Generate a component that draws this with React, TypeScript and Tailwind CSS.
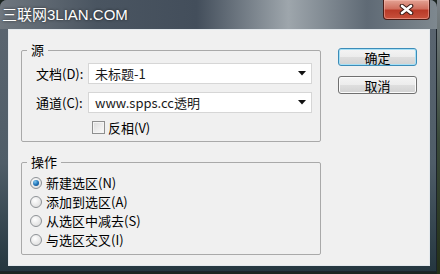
const cjk = "font-['Noto_Sans_CJK_SC','Noto_Sans',sans-serif]";

function Dropdown({ value }: { value: string }) {
  return (
    <div className="flex-1 h-[21px] bg-white border border-[#d6d6d6] flex items-center justify-between pl-[6px] pr-[5px]">
      <span className="text-[13px] leading-none text-[#1a1a1a]">{value}</span>
      <svg width="8" height="5" viewBox="0 0 8 5">
        <path d="M0 0 H8 L4 4.5 Z" fill="#111" />
      </svg>
    </div>
  );
}

function Radio({ checked, label }: { checked?: boolean; label: string }) {
  return (
    <div className="h-[19px] flex items-center gap-[4px]">
      <span className="w-[12px] h-[12px] rounded-full border border-[#8e9296] bg-[radial-gradient(circle_at_40%_35%,#ffffff,#e2e2e2_70%,#cfcfcf)] flex items-center justify-center">
        {checked && (
          <span className="w-[6px] h-[6px] rounded-full bg-[radial-gradient(circle_at_35%_30%,#7cc6f0,#1c6fb4_55%,#0d3f74)]" />
        )}
      </span>
      <span className="text-[13px] leading-none text-black">{label}</span>
    </div>
  );
}

function Button({ label, primary }: { label: string; primary?: boolean }) {
  return (
    <div
      className={
        primary
          ? "w-[79px] h-[18px] rounded-[3px] border border-[#3c8cb8] shadow-[inset_0_0_0_1px_#a6e0f6] bg-[linear-gradient(#f4f4f4_0%,#ececec_50%,#dedede_51%,#d2d2d2_100%)] flex items-center justify-center"
          : "w-[79px] h-[18px] rounded-[3px] border border-[#707070] shadow-[inset_0_0_0_1px_#fbfbfb] bg-[linear-gradient(#f4f4f4_0%,#ececec_50%,#dedede_51%,#d2d2d2_100%)] flex items-center justify-center"
      }
    >
      <span className="text-[13px] leading-none text-black">{label}</span>
    </div>
  );
}

export default function App() {
  return (
    <div className={`w-[440px] h-[274px] overflow-hidden flex bg-[#1a2420] ${cjk}`}>
      <div className="w-[437px] h-[272px] shrink-0 rounded-t-[7px] flex flex-col bg-[linear-gradient(#5c6671,#4f5d68_60%,#24363f)] shadow-[inset_-1px_-1px_0_#1b232a]">
        {/* title bar */}
        <div className="h-[29px] shrink-0 rounded-t-[7px] flex items-start justify-between pl-[2px] pr-[7px] bg-[linear-gradient(90deg,#6f777f_0%,#4a5561_22%,#434e5b_45%,#9ea6ac_66%,#5f6a75_84%,#7e888f_100%)]">
          <div className="pt-[5px] flex items-baseline text-white [text-shadow:0_0_3px_rgba(0,0,0,0.7)]">
            <span className="text-[15px] leading-[18px]">三联网</span>
            <span className="text-[15px] leading-[18px] font-['Liberation_Sans',sans-serif]">3LIAN.COM</span>
          </div>
          <div className="w-[47px] h-[20px] rounded-b-[4px] border border-t-0 border-[#4a1c16] bg-[linear-gradient(#e3a394_0%,#d0705f_45%,#b93a28_55%,#c8513c_100%)] shadow-[inset_0_0_0_1px_rgba(255,200,190,0.45)] flex items-center justify-center">
            <svg width="15" height="11" viewBox="0 0 15 11">
              <path d="M3 2 L12 9 M12 2 L3 9" stroke="#3a1a15" strokeWidth="4.6" strokeLinecap="round" />
              <path d="M3 2 L12 9 M12 2 L3 9" stroke="#ffffff" strokeWidth="2.6" strokeLinecap="round" />
            </svg>
          </div>
        </div>

        {/* client area */}
        <div className="flex-1 pl-[8px] pr-[7px] pb-[6px]">
          <div className="h-full border border-[#e4e9ed]">
            <div className="h-full bg-[#f0f0f0] flex pl-[12px] pt-[11px]">
              <div className="w-[300px] flex flex-col">
                <fieldset className="border border-[#a9a9a9] rounded-[2px] px-0 pt-[4px] pb-[6px]">
                  <legend className="ml-[5px] px-[4px] text-[13px] leading-[18px] text-black">源</legend>
                  <div className="pl-[14px] pr-[8px] flex flex-col gap-[8px]">
                    <div className="flex items-center">
                      <span className="w-[52px] text-[13px] leading-none text-black">文档(D):</span>
                      <Dropdown value="未标题-1" />
                    </div>
                    <div className="flex items-center">
                      <span className="w-[52px] text-[13px] leading-none text-black">通道(C):</span>
                      <Dropdown value="www.spps.cc透明" />
                    </div>
                  </div>
                  <div className="h-[16px] mt-[6px] pl-[70px] flex items-center gap-[3px]">
                    <span className="w-[13px] h-[13px] border border-[#8e8f8f] shadow-[inset_0_0_0_1px_#f4f4f4] bg-[linear-gradient(135deg,#dcdcdc,#fbfbfb)]" />
                    <span className="text-[13px] leading-none text-black">反相(V)</span>
                  </div>
                </fieldset>

                <fieldset className="mt-[11px] border border-[#a9a9a9] rounded-[2px] px-0 pt-[2px] pb-[5px]">
                  <legend className="ml-[5px] px-[4px] text-[13px] leading-[18px] text-black">操作</legend>
                  <div className="pl-[8px]">
                    <Radio checked label="新建选区(N)" />
                    <Radio label="添加到选区(A)" />
                    <Radio label="从选区中减去(S)" />
                    <Radio label="与选区交叉(I)" />
                  </div>
                </fieldset>
              </div>

              <div className="ml-[17px] pt-[7px] flex flex-col gap-[10px]">
                <Button primary label="确定" />
                <Button label="取消" />
              </div>
            </div>
          </div>
        </div>
      </div>
      <div className="flex-1 bg-[linear-gradient(#7b8288,#3a4a3a_50%,#243018)]" />
    </div>
  );
}
